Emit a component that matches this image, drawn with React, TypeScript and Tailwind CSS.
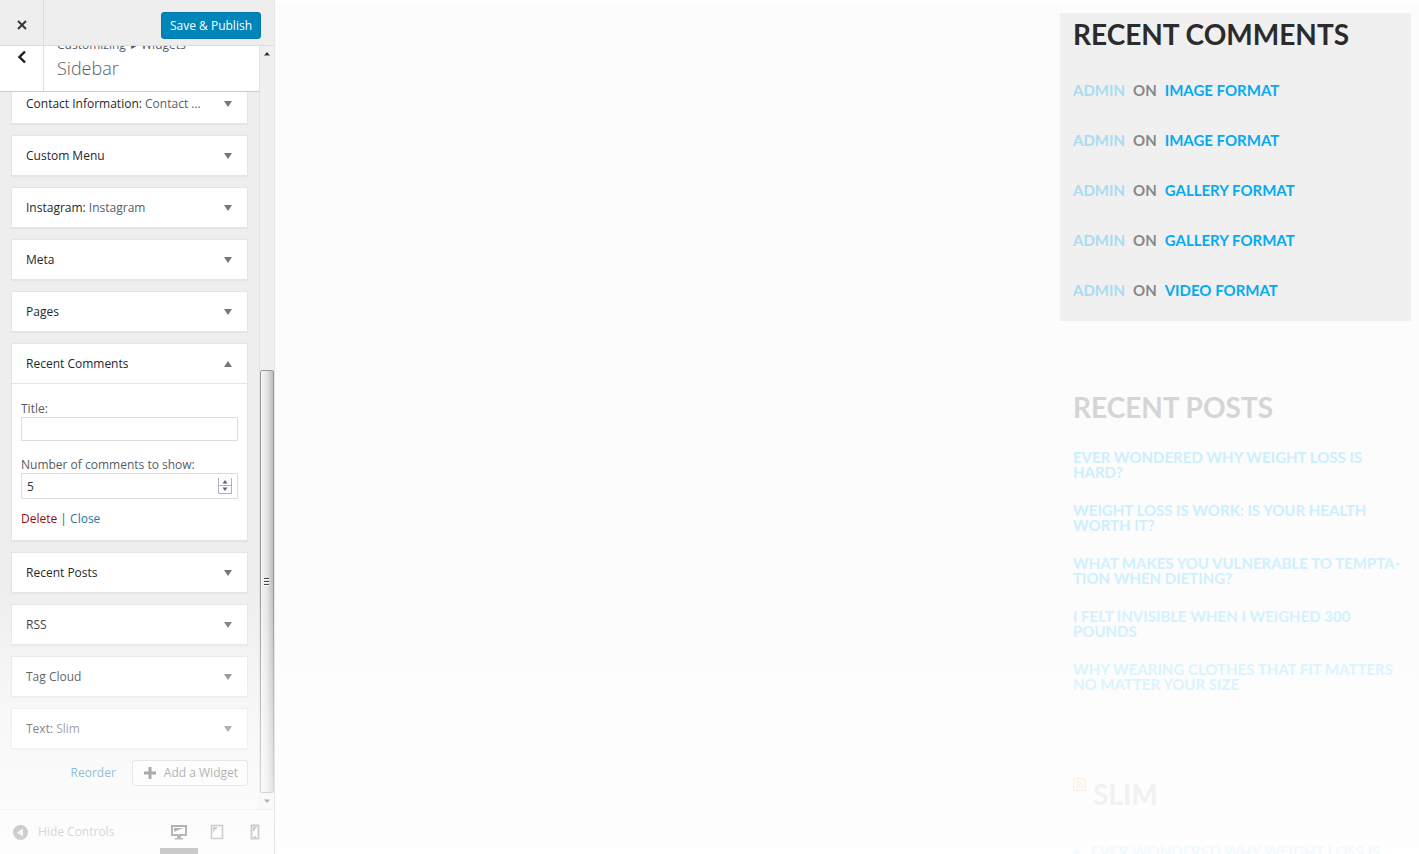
import React, { useState } from "react";

const uiFont = "font-['Open_Sans','Noto_Sans',sans-serif]";

function Triangle({ up = false }: { up?: boolean }) {
  return (
    <svg width="8" height="6" viewBox="0 0 8 6" className="shrink-0 fill-[#72777c]" aria-hidden="true">
      {up ? <path d="M4 0 L8 6 H0 Z" /> : <path d="M0 0 H8 L4 6 Z" />}
    </svg>
  );
}

type WidgetProps = {
  name: string;
  title?: string;
  open?: boolean;
  children?: React.ReactNode;
};

function Widget({ name, title, open = false, children }: WidgetProps) {
  return (
    <section className="border border-[#e5e5e5] bg-white shadow-[0_1px_1px_rgba(0,0,0,0.04)]">
      <button
        type="button"
        aria-expanded={open}
        className="flex h-[39px] w-full items-center justify-between pr-[15px] pl-3.5 text-left text-[12px] font-medium text-[#23282d]"
      >
        <span className="truncate">
          {name}
          {title && (
            <>
              : <span className="font-normal text-[#555d66]">{title}</span>
            </>
          )}
        </span>
        <Triangle up={open} />
      </button>
      {children}
    </section>
  );
}

function RecentCommentsForm() {
  const [title, setTitle] = useState("");
  const [count, setCount] = useState("5");
  return (
    <form className="border-t border-[#e5e5e5] px-[9px] pt-4 pb-[13px] text-[12px] leading-4 text-[#555d66]">
      <label htmlFor="rc-title" className="block pt-px">Title:</label>
      <input
        id="rc-title"
        type="text"
        value={title}
        onChange={(e) => setTitle(e.target.value)}
        className="block h-6 w-full border border-[#ddd] bg-white px-[5px] text-[#32373c]"
      />
      <label htmlFor="rc-count" className="mt-4 block">Number of comments to show:</label>
      <div className="relative">
        <input
          id="rc-count"
          type="number"
          value={count}
          onChange={(e) => setCount(e.target.value)}
          className="block h-[26px] w-full [appearance:textfield] border border-[#ddd] bg-white px-[5px] text-[#32373c]"
        />
        <svg className="absolute top-[5px] right-1.5" width="14" height="16" viewBox="0 0 14 16" aria-hidden="true">
          <path d="M0.5 0V15.5H13.5V0M0 7.5H14" fill="none" stroke="#a9b2c0" />
          <path d="M7 2 L9.5 5.5 H4.500Z M7 13 L9.500 9.500 H4.500Z" fill="#596579" />
        </svg>
      </div>
      <p className="mt-3">
        <a href="#delete" className="text-[#8f1010]">Delete</a> |{" "}
        <a href="#close" className="text-[#2a76a3]">Close</a>
      </p>
    </form>
  );
}

function Scrollbar() {
  return (
    <div className="flex w-[15px] shrink-0 flex-col border-l border-[#e2e2e2] bg-[#f0f0f0]" aria-hidden="true">
      <svg width="14" height="16" viewBox="0 0 14 16"><path d="M7 6 L10 9.500H4Z" fill="#333" /></svg>
      <div className="grow-[309] basis-0" />
      <div className="flex grow-[422] basis-0 items-center rounded-xs border border-[#999] bg-linear-to-r from-[#f5f5f5] via-[#e4e4e4] to-[#bdbdbd]">
        <svg width="12" height="10" viewBox="0 0 12 10">
          <path d="M3 1.500H8M3 4.500H8M3 7.500H8" stroke="#444" />
          <path d="M3 2.500H8M3 5.500H8M3 8.500H8" stroke="#fff" />
        </svg>
      </div>
      <svg width="14" height="16" viewBox="0 0 14 16"><path d="M7 10 L10 6.500H4Z" fill="#333" /></svg>
    </div>
  );
}

function Controls() {
  return (
    <aside className={`relative flex w-[275px] shrink-0 flex-col border-r border-[#e6e6e6] bg-linear-to-b from-[#eee] from-70% to-[#f8f8f8] ${uiFont}`}>
      <header className="flex h-[46px] shrink-0 items-stretch border-b border-[#ddd]">
        <button type="button" aria-label="Close" className="flex w-11 items-center justify-center border-r border-[#ddd] pt-1">
          <svg width="10" height="10" viewBox="0 0 10 10" aria-hidden="true">
            <path d="M1 1L9 9M9 1L1 9" stroke="#32373c" strokeWidth="2" />
          </svg>
        </button>
        <div className="flex grow items-center justify-end pt-1.5 pr-[13px]">
          <button type="button" className="h-[27px] rounded-[3px] border border-[#0079aa] bg-[#0085ba] px-2 text-[12px] font-medium text-white">
            Save &amp; Publish
          </button>
        </div>
      </header>

      <div className="flex min-h-0 grow">
        <div className="flex min-w-0 grow flex-col overflow-hidden">
          <div className="flex h-[46px] shrink-0 overflow-hidden border-b border-[#ccc] bg-white">
            <button type="button" aria-label="Back" className="flex w-11 shrink-0 justify-center border-r border-[#ddd] pt-1">
              <svg width="10" height="14" viewBox="0 0 10 14" aria-hidden="true">
                <path d="M8 1.500L2.500 7L8 12.500" fill="none" stroke="#191e23" strokeWidth="2.400" />
              </svg>
            </button>
            <div className="-mt-2.5 pl-[13px]">
              <p className="text-[12px] leading-[18px] text-[#555d66]">
                Customizing <span className="px-0.5 text-[10px]">▸</span> Widgets
              </p>
              <h1 className="text-[18px] leading-7 font-light text-[#555d66]">Sidebar</h1>
            </div>
          </div>
          <div className="min-h-0 grow overflow-hidden px-[11px]">
            <div className="-mt-[9px] flex flex-col gap-[11px]">
              <Widget name="Contact Information" title="Contact ..." />
              <Widget name="Custom Menu" />
              <Widget name="Instagram" title="Instagram" />
              <Widget name="Meta" />
              <Widget name="Pages" />
              <Widget name="Recent Comments" open>
                <RecentCommentsForm />
              </Widget>
              <Widget name="Recent Posts" />
              <Widget name="RSS" />
              <Widget name="Tag Cloud" />
              <Widget name="Text" title="Slim" />
              <div className="flex items-center justify-end gap-4 text-[12px]">
                <a href="#reorder" className="text-[#0073aa]">Reorder</a>
                <button type="button" className="flex h-[26px] items-center gap-2 rounded-[3px] border border-[#ccc] bg-[#fafafa] pr-[9px] pl-[11px] text-[#555]">
                  <svg width="12" height="12" viewBox="0 0 12 12" aria-hidden="true">
                    <path d="M6 0V12M0 6H12" stroke="#444" strokeWidth="3" />
                  </svg>
                  Add a Widget
                </button>
              </div>
            </div>
          </div>
        </div>
        <Scrollbar />
      </div>

      <footer className="flex h-[45px] shrink-0 items-stretch justify-between border-t border-[#ddd] pl-[13px]">
        <button type="button" className="flex items-center gap-2.5 text-[12px] text-[#72777c]">
          <svg width="15" height="15" viewBox="0 0 15 15" aria-hidden="true">
            <circle cx="7.500" cy="7.500" r="7.500" fill="#555d66" />
            <path d="M10 3.500V11.500L4 7.500Z" fill="#eee" />
          </svg>
          Hide Controls
        </button>
        <div className="flex">
          <button type="button" aria-label="Desktop preview" className="flex w-[38px] items-center justify-center border-b-[6px] border-[#333] pt-1.5">
            <svg width="16" height="16" viewBox="0 0 16 16" aria-hidden="true">
              <path d="M1 2H15V11H1Z" fill="none" stroke="#111" strokeWidth="2" />
              <path d="M3 4H12L3 8ZM6 12H10V14H12V15.500H4V14H6Z" fill="#111" />
            </svg>
          </button>
          <button type="button" aria-label="Tablet preview" className="flex w-[38px] items-center justify-center">
            <svg width="14" height="16" viewBox="0 0 14 16" aria-hidden="true">
              <path d="M1.500 1.500H12.500V14.500H1.500Z" fill="none" stroke="#555d66" strokeWidth="1.600" />
              <path d="M3 3H8L3 8Z" fill="#555d66" />
            </svg>
          </button>
          <button type="button" aria-label="Mobile preview" className="flex w-[38px] items-center justify-center">
            <svg width="10" height="16" viewBox="0 0 10 16" aria-hidden="true">
              <path d="M1.500 1.500H8.500V14.500H1.500Z" fill="none" stroke="#555d66" strokeWidth="1.800" />
              <path d="M3 3H7L3 8ZM4 12H6V14H4Z" fill="#555d66" />
            </svg>
          </button>
        </div>
      </footer>
      <div className="pointer-events-none absolute inset-x-0 bottom-0 h-[274px] bg-linear-to-b from-white/0 via-white/40 to-white/75" />
    </aside>
  );
}

const comments = ["IMAGE FORMAT", "IMAGE FORMAT", "GALLERY FORMAT", "GALLERY FORMAT", "VIDEO FORMAT"];

const posts = [
  { lines: ["EVER WONDERED WHY WEIGHT LOSS IS", "HARD?"], color: "text-[#ccefff]" },
  { lines: ["WEIGHT LOSS IS WORK: IS YOUR HEALTH", "WORTH IT?"], color: "text-[#ccefff]" },
  { lines: ["WHAT MAKES YOU VULNERABLE TO TEMPTA-", "TION WHEN DIETING?"], color: "text-[#cff0ff]" },
  { lines: ["I FELT INVISIBLE WHEN I WEIGHED 300", "POUNDS"], color: "text-[#d3f1ff]" },
  { lines: ["WHY WEARING CLOTHES THAT FIT MATTERS", "NO MATTER YOUR SIZE"], color: "text-[#daf4ff]" },
];

const heading = "text-[28px] leading-8 font-bold";

function Preview() {
  return (
    <main className="flex min-w-0 grow flex-col overflow-hidden border-t-4 border-white bg-linear-to-b from-[#fcfcfc] from-70% to-[#fefefe] pt-[9px] pr-2 font-['Lato',sans-serif] whitespace-nowrap">
      <div className="w-[351px] shrink-0 self-end text-[15px] font-bold">
        <section className="bg-[#f0f0f0] px-[13px] pt-[5px] pb-1.5">
          <h2 className={`${heading} text-[#2b2b2b]`}>RECENT COMMENTS</h2>
          <ul className="pt-[15px]">
            {comments.map((post, i) => (
              <li key={i} className="flex h-[50px] items-center gap-2 text-[#888]">
                <a href="#admin" className="text-[#a9dcf1]">ADMIN</a>
                <span>ON</span>
                <a href="#post" className="text-[#06aaf0]">{post}</a>
              </li>
            ))}
          </ul>
        </section>
        <section className="px-[13px] pt-[70px]">
          <h2 className={`${heading} text-[#d5d5d5]`}>RECENT POSTS</h2>
          <ul className="flex flex-col gap-[23px] pt-[27px] leading-[15px]">
            {posts.map((post) => (
              <li key={post.lines[0]}>
                <a href="#post" className={post.color}>
                  {post.lines.map((line) => (
                    <span key={line} className="block">{line}</span>
                  ))}
                </a>
              </li>
            ))}
          </ul>
        </section>
        <section className="px-[13px] pt-[86px]">
          <h2 className={`${heading} flex gap-[7px] text-[#f1f1f1]`}>
            <svg width="13" height="13" viewBox="0 0 13 13" fill="none" stroke="#feeee4" aria-hidden="true">
              <rect x="0.500" y="0.500" width="12" height="12" rx="1.500" strokeWidth="1.400" />
              <path d="M3 3A7 7 0 0 1 10 10M3 6A4 4 0 0 1 7 10" strokeWidth="1.400" />
              <circle cx="3.800" cy="9.300" r="0.700" />
            </svg>
            SLIM
          </h2>
          <ul className="list-disc pt-[34px] pl-[18px] leading-[15px] text-[#f0faff]">
            <li><a href="#post">EVER WONDERED WHY WEIGHT LOSS IS</a></li>
          </ul>
        </section>
      </div>
    </main>
  );
}

export default function App() {
  return (
    <div className="flex h-screen overflow-hidden bg-white">
      <Controls />
      <Preview />
    </div>
  );
}
